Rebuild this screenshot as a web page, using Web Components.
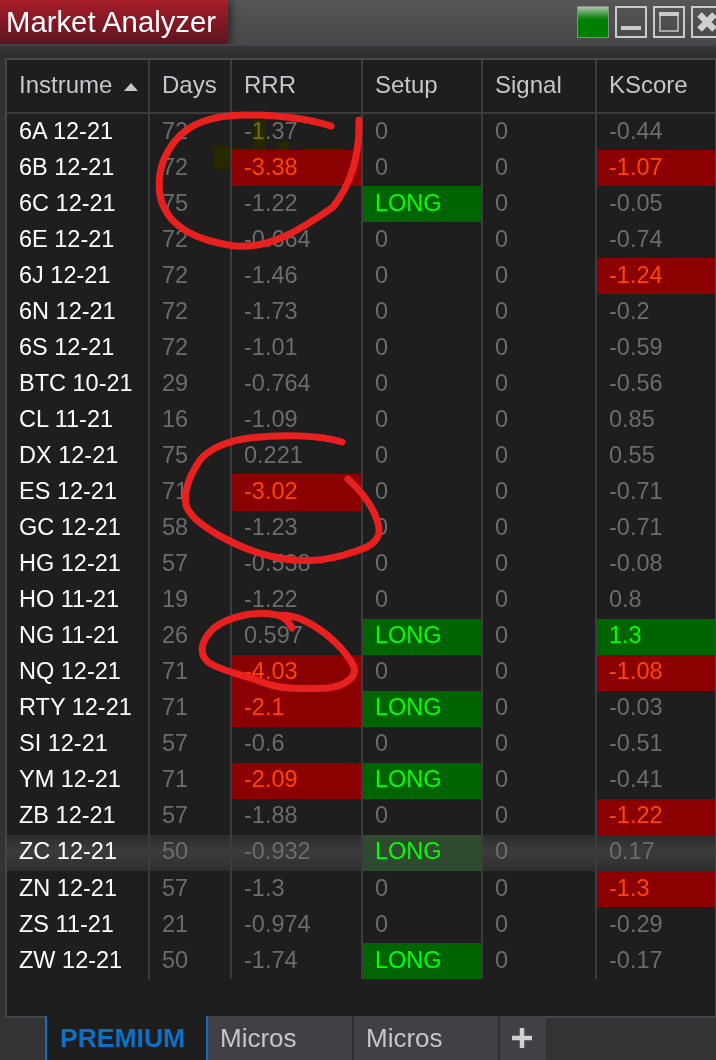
<!DOCTYPE html>
<html>
<head>
<meta charset="utf-8">
<title>Market Analyzer</title>
<style>
  html, body { margin: 0; background: #333336; }
  body { font-family: "Liberation Sans", Arial, sans-serif; }
</style>
</head>
<body>
<market-analyzer></market-analyzer>

<script>
// Table content: instrument, days, rrr, setup, signal, kscore
const rows = [
  ['6A 12-21', '72', '-1.37', '0', '0', '-0.44'],
  ['6B 12-21', '72', '-3.38', '0', '0', '-1.07'],
  ['6C 12-21', '75', '-1.22', 'LONG', '0', '-0.05'],
  ['6E 12-21', '72', '-0.664', '0', '0', '-0.74'],
  ['6J 12-21', '72', '-1.46', '0', '0', '-1.24'],
  ['6N 12-21', '72', '-1.73', '0', '0', '-0.2'],
  ['6S 12-21', '72', '-1.01', '0', '0', '-0.59'],
  ['BTC 10-21', '29', '-0.764', '0', '0', '-0.56'],
  ['CL 11-21', '16', '-1.09', '0', '0', '0.85'],
  ['DX 12-21', '75', '0.221', '0', '0', '0.55'],
  ['ES 12-21', '71', '-3.02', '0', '0', '-0.71'],
  ['GC 12-21', '58', '-1.23', '0', '0', '-0.71'],
  ['HG 12-21', '57', '-0.538', '0', '0', '-0.08'],
  ['HO 11-21', '19', '-1.22', '0', '0', '0.8'],
  ['NG 11-21', '26', '0.597', 'LONG', '0', '1.3'],
  ['NQ 12-21', '71', '-4.03', '0', '0', '-1.08'],
  ['RTY 12-21', '71', '-2.1', 'LONG', '0', '-0.03'],
  ['SI 12-21', '57', '-0.6', '0', '0', '-0.51'],
  ['YM 12-21', '71', '-2.09', 'LONG', '0', '-0.41'],
  ['ZB 12-21', '57', '-1.88', '0', '0', '-1.22'],
  ['ZC 12-21', '50', '-0.932', 'LONG', '0', '0.17'],
  ['ZN 12-21', '57', '-1.3', '0', '0', '-1.3'],
  ['ZS 11-21', '21', '-0.974', '0', '0', '-0.29'],
  ['ZW 12-21', '50', '-1.74', 'LONG', '0', '-0.17']
];

// Values below these get the red cell
const RRR_LIMIT = -2;
const KSCORE_LIMIT = -1;

// One cell of the table
customElements.define('ma-cell', class extends HTMLElement {
  constructor() {
    super();
    this.attachShadow({ mode: 'open' });
    this.shadowRoot.innerHTML = `
      <style>
        :host {
          display: flex;
          align-items: center;
          min-width: 0;
          overflow: hidden;
          white-space: nowrap;
          padding: 0 0 2px 12px;
          border-right: 2px solid #3b3b40;
          color: #6c6c6c;
        }
        :host([kind="name"]) { color: #fff; }
        :host([kind="red"]) { background: #8b0000; color: #ff4500; }
        :host([kind="green"]) { background: #006400; color: #00ff00; }
        :host([last]) { border-right: 0; }
      </style>
      <slot></slot>
    `;
  }
});

// A row of six cells
customElements.define('ma-row', class extends HTMLElement {
  constructor() {
    super();
    this.attachShadow({ mode: 'open' });
    this.shadowRoot.innerHTML = `
      <style>
        :host {
          display: grid;
          grid-template-columns: 143px 82px 131px 120px 114px 1fr;
          flex: 1 1 0;
          min-height: 0;
          font-size: 23.5px;
        }
        :host([selected]) {
          background: linear-gradient(#2c2c2c, #3c3c3c 45%, #2e2e2e);
        }
      </style>
      <slot></slot>
    `;
  }

  set data(row) {
    const [name, days, rrr, setup, signal, kscore] = row;
    const cell = (text, kind) => {
      const el = document.createElement('ma-cell');
      el.textContent = text;
      if (kind) el.setAttribute('kind', kind);
      this.appendChild(el);
      return el;
    };
    cell(name, 'name');
    cell(days);
    cell(rrr, parseFloat(rrr) < RRR_LIMIT ? 'red' : '');
    const setupCell = cell(setup, setup === 'LONG' ? 'green' : '');
    if (setup === 'LONG' && this.hasAttribute('selected')) setupCell.style.background = '#2f4a2f';
    cell(signal);
    const k = parseFloat(kscore);
    cell(kscore, k < KSCORE_LIMIT ? 'red' : k >= 1 ? 'green' : '').setAttribute('last', '');
  }
});

// Column headers, same columns as the rows
customElements.define('ma-header', class extends HTMLElement {
  constructor() {
    super();
    this.attachShadow({ mode: 'open' });
    this.shadowRoot.innerHTML = `
      <style>
        :host {
          display: grid;
          grid-template-columns: 143px 82px 131px 120px 114px 1fr;
          height: 52px;
          border-bottom: 2px solid #3b3b40;
          font-size: 24px;
          color: #c4c8cc;
        }
        div {
          display: flex;
          align-items: center;
          padding: 0 0 2px 12px;
          border-right: 2px solid #3b3b40;
          white-space: nowrap;
        }
        div:last-child { border-right: 0; }
        .clip { display: inline-block; width: 94px; flex: none; }
        .sort {
          flex: none;
          margin: 3px 0 0 11px;
          width: 0; height: 0;
          border-left: 7px solid transparent;
          border-right: 7px solid transparent;
          border-bottom: 8px solid #c8c8c8;
        }
      </style>
      <div><span class="clip">Instrume</span><span class="sort"></span></div>
      <div>Days</div>
      <div>RRR</div>
      <div>Setup</div>
      <div>Signal</div>
      <div>KScore</div>
    `;
  }
});

// Window title bar with the red caption and the buttons
customElements.define('ma-titlebar', class extends HTMLElement {
  constructor() {
    super();
    this.attachShadow({ mode: 'open' });
    this.shadowRoot.innerHTML = `
      <style>
        :host {
          display: flex;
          height: 44px;
          background: linear-gradient(#565656, #484848);
          overflow: hidden;
        }
        .caption {
          width: 228px;
          box-sizing: border-box;
          padding-left: 6px;
          display: flex;
          align-items: center;
          font-size: 29.3px;
          color: #fff;
          background: linear-gradient(#a81e2a, #5c1420);
          box-shadow: 3px 0 8px rgba(0, 0, 0, 0.5);
          white-space: nowrap;
        }
        .buttons {
          margin-left: auto;
          display: flex;
          gap: 6px;
          padding-top: 6px;
          margin-right: -7px;
        }
        .btn {
          width: 32px;
          height: 32px;
          box-sizing: border-box;
          border: 2px solid #cacaca;
          flex: none;
        }
        .btn svg { display: block; width: 28px; height: 28px; }
        .led {
          border: 1px solid #8a8a8a;
          background: linear-gradient(#a4c8a4, #2c8f2c 30%, #008000 42%);
        }
      </style>
      <div class="caption">Market Analyzer</div>
      <div class="buttons">
        <div class="btn led"></div>
        <div class="btn"><svg viewBox="0 0 28 28"><rect x="4" y="18" width="20" height="4" fill="#cacaca"/></svg></div>
        <div class="btn"><svg viewBox="0 0 28 28"><rect x="5" y="5" width="18" height="18" fill="none" stroke="#a8a8a8" stroke-width="2"/><rect x="4" y="4" width="20" height="4" fill="#cacaca"/></svg></div>
        <div class="btn"><svg viewBox="0 0 28 28"><path d="M6.5 6.5 L21.5 21.5 M21.5 6.5 L6.5 21.5" stroke="#d0d0d0" stroke-width="6.5" fill="none"/></svg></div>
      </div>
    `;
  }
});

// Bottom tab strip
customElements.define('ma-tabs', class extends HTMLElement {
  constructor() {
    super();
    this.attachShadow({ mode: 'open' });
    this.shadowRoot.innerHTML = `
      <style>
        :host {
          display: flex;
          height: 44px;
          padding-left: 45px;
          background: linear-gradient(#45454a, #45454a) 5px 0 / 100% 2px no-repeat, #333336;
          font-size: 26px;
          color: #c6c6c6;
        }
        div {
          display: flex;
          align-items: center;
          box-sizing: border-box;
          background: #404046;
          border-right: 2px solid #2f2f33;
          padding-left: 12px;
        }
        .active {
          width: 163px;
          padding-left: 13px;
          background: #1e1e1e;
          color: #0f6fc4;
          font-size: 26.5px;
          font-weight: bold;
          border-left: 2px solid #0f6fc4;
          border-right: 2px solid #0f6fc4;
        }
        .micros { width: 146px; }
        .add { width: 46px; padding: 0 2px 0 0; justify-content: center; border-right: 0; }
        .add svg { width: 20px; height: 20px; }
      </style>
      <div class="active">PREMIUM</div>
      <div class="micros">Micros</div>
      <div class="micros">Micros</div>
      <div class="add"><svg viewBox="0 0 20 20"><path d="M0 10 H20 M10 0 V20" stroke="#d0d0d0" stroke-width="4.5"/></svg></div>
    `;
  }
});

// The hand-drawn marks on top of the table
customElements.define('ma-scribble', class extends HTMLElement {
  constructor() {
    super();
    this.attachShadow({ mode: 'open' });
    this.shadowRoot.innerHTML = `
      <style>
        :host { position: absolute; inset: 0; pointer-events: none; }
        svg { position: absolute; left: 0; top: 0; }
        path { fill: none; stroke: #e8201f; stroke-width: 7; stroke-linecap: round; stroke-linejoin: round; }
        .tint { mix-blend-mode: multiply; }
        .lift { mix-blend-mode: screen; }
      </style>
      <svg width="716" height="1060" viewBox="0 0 716 1060">
        <defs>
          <g id="blot">
            <rect x="214" y="146" width="16" height="23"/>
            <rect x="232" y="148" width="22" height="2"/>
            <rect x="254" y="120" width="12" height="30"/>
            <rect x="277" y="142" width="12" height="8"/>
            <rect x="306" y="148" width="38" height="2"/>
          </g>
        </defs>
        <use href="#blot" class="tint" fill="#ffff00"/>
        <use href="#blot" class="lift" fill="#0a0a00"/>
        <path d="M331 126 C315 121 285 115 245 115 C215 115 190 122 175 141 C163 156 157 175 160 195 C165 222 190 240 235 246 C270 249 300 230 333 207 C348 188 360 160 359 120"/>
        <path d="M342 442 C320 435 280 434 250 438 C225 441 208 450 200 460 C190 475 183 490 186 505 C192 525 240 549 270 556 C310 566 340 558 367 547 C378 541 382 533 377 520 C372 505 360 490 348 479"/>
        <path d="M292 628 C288 620 283 616 277 615 C255 610 228 617 214 628 C203 638 197 652 208 662 C220 671 245 675 262 682 C280 690 310 689 328 688 C345 686 357 677 354 667 C346 650 325 630 303 620 C295 616 285 615 277 615"/>
      </svg>
    `;
  }
});

// The whole window
customElements.define('market-analyzer', class extends HTMLElement {
  constructor() {
    super();
    this.attachShadow({ mode: 'open' });
    this.shadowRoot.innerHTML = `
      <style>
        :host {
          display: flex;
          flex-direction: column;
          position: relative;
          width: 716px;
          height: 1060px;
          overflow: hidden;
          background: #333336;
        }
        .strip {
          height: 14px;
          background: linear-gradient(#444448 2px, #37373a 2px, #2e2e31);
        }
        .panel {
          margin-left: 5px;
          flex: 1;
          display: flex;
          flex-direction: column;
          box-sizing: border-box;
          background: #1e1e1e;
          border: solid #45454a;
          border-width: 2px 1px 0 2px;
        }
        .rows {
          display: flex;
          flex-direction: column;
          height: 865px;
        }
      </style>
      <ma-titlebar></ma-titlebar>
      <div class="strip"></div>
      <div class="panel">
        <ma-header></ma-header>
        <div class="rows"></div>
      </div>
      <ma-tabs></ma-tabs>
      <ma-scribble></ma-scribble>
    `;

    // Build the rows
    const list = this.shadowRoot.querySelector('.rows');
    rows.forEach(row => {
      const el = document.createElement('ma-row');
      if (row[0] === 'ZC 12-21') el.setAttribute('selected', '');
      list.appendChild(el);
      el.data = row;
    });
  }
});
</script>
</body>
</html>
